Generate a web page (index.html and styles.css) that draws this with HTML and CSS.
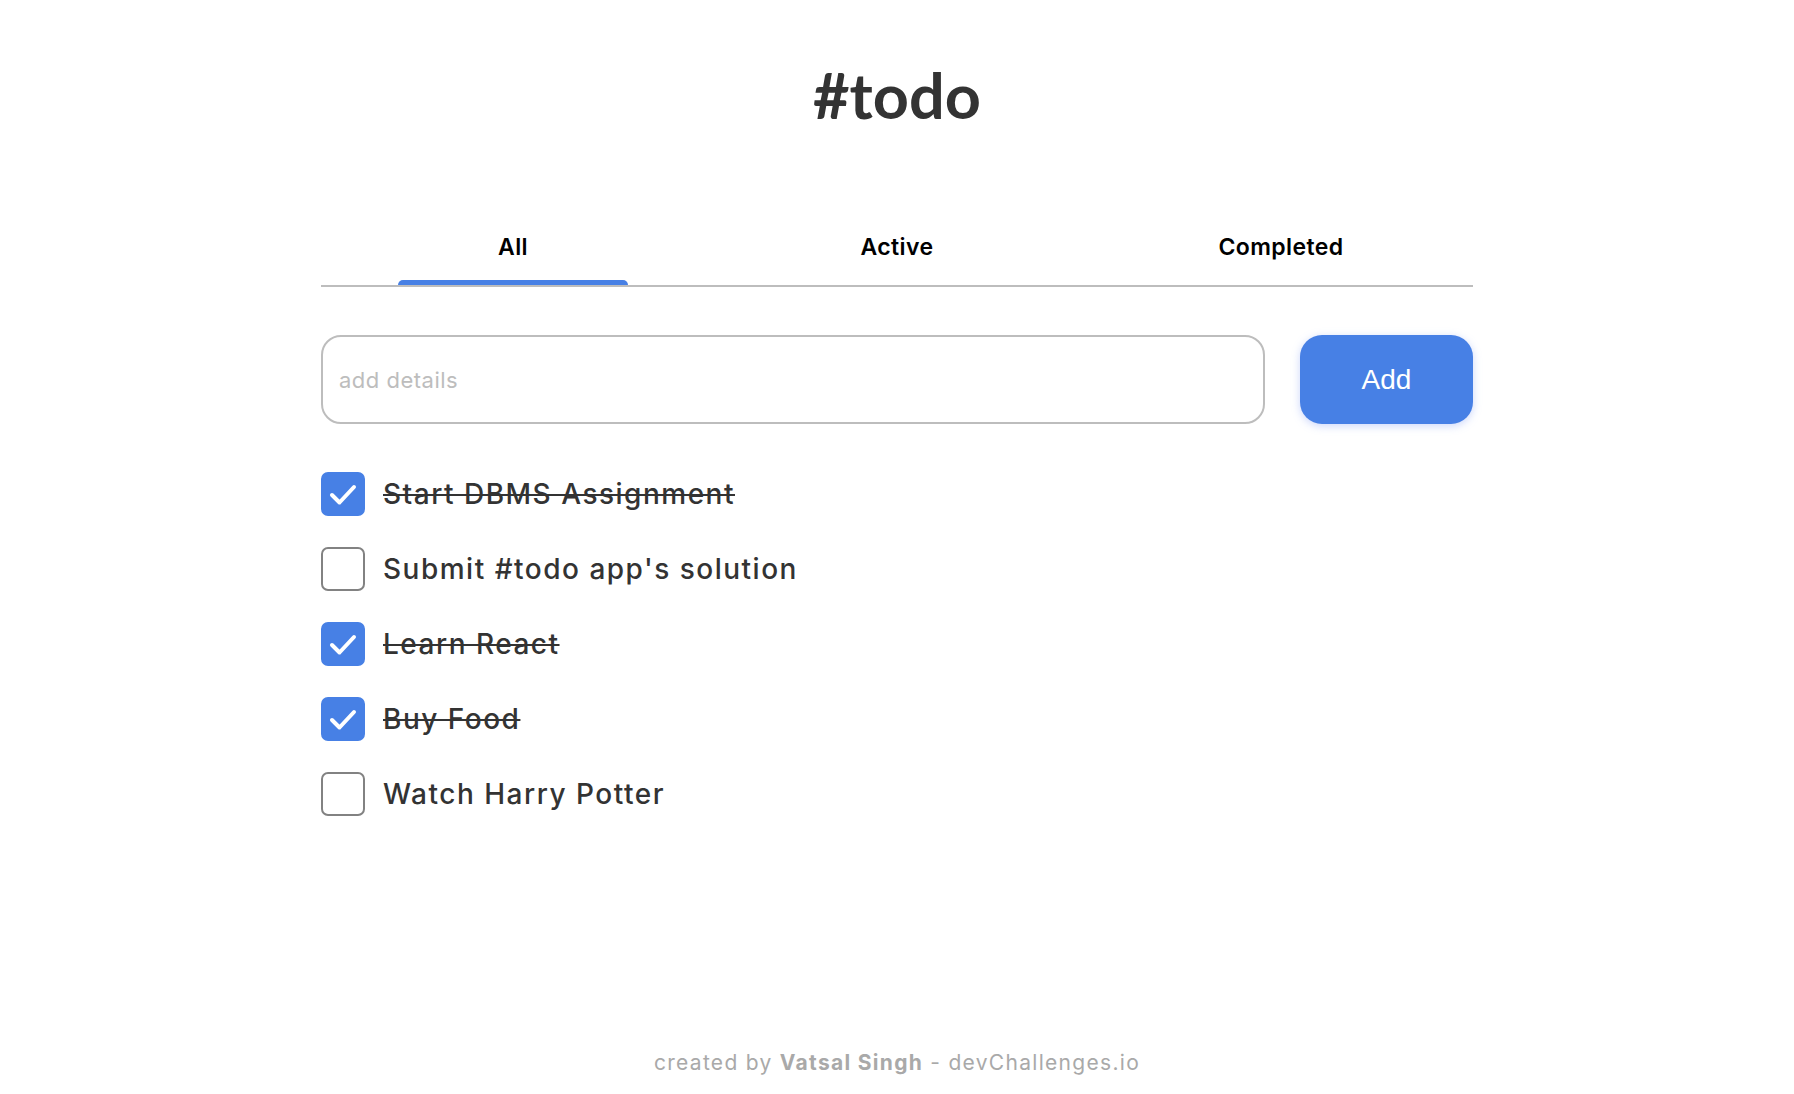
FILE: index.html
```html
<!DOCTYPE html>
<html lang="en">
<head>
<meta charset="utf-8">
<title>#todo</title>
<link rel="stylesheet" href="styles.css">
</head>
<body>
<main class="app">
  <h1 class="title">#todo</h1>
  <nav class="tabs">
    <div class="tab active"><span class="tab-label">All</span><span class="tab-bar"></span></div>
    <div class="tab"><span class="tab-label">Active</span><span class="tab-bar"></span></div>
    <div class="tab"><span class="tab-label">Completed</span><span class="tab-bar"></span></div>
  </nav>
  <form class="add-form">
    <input class="add-input" type="text" placeholder="add details">
    <button class="add-btn" type="button">Add</button>
  </form>
  <ul class="list">
    <li class="item done">
      <span class="box checked"><svg viewBox="0 0 44 44" width="44" height="44"><path d="M11 23 L18.5 30.5 L33 15" fill="none" stroke="#fff" stroke-width="4" stroke-linecap="round" stroke-linejoin="round"/></svg></span>
      <span class="label">Start DBMS Assignment</span>
    </li>
    <li class="item">
      <span class="box"></span>
      <span class="label">Submit #todo app's solution</span>
    </li>
    <li class="item done">
      <span class="box checked"><svg viewBox="0 0 44 44" width="44" height="44"><path d="M11 23 L18.5 30.5 L33 15" fill="none" stroke="#fff" stroke-width="4" stroke-linecap="round" stroke-linejoin="round"/></svg></span>
      <span class="label">Learn React</span>
    </li>
    <li class="item done">
      <span class="box checked"><svg viewBox="0 0 44 44" width="44" height="44"><path d="M11 23 L18.5 30.5 L33 15" fill="none" stroke="#fff" stroke-width="4" stroke-linecap="round" stroke-linejoin="round"/></svg></span>
      <span class="label">Buy Food</span>
    </li>
    <li class="item">
      <span class="box"></span>
      <span class="label">Watch Harry Potter</span>
    </li>
  </ul>
</main>
<footer class="footer">created by <b>Vatsal Singh</b> - devChallenges.io</footer>
</body>
</html>
```

FILE: styles.css
```css
html, body {
  margin: 0;
  padding: 0;
  background: #fff;
}
body {
  min-height: 100vh;
  display: flex;
  flex-direction: column;
  font-family: Inter, "Open Sans", sans-serif;
  color: #333333;
}
.app {
  width: 1152px;
  margin: 0 auto;
}
.title {
  margin: 0;
  padding-top: 64px;
  font-family: Lato, Inter, sans-serif;
  font-weight: 700;
  font-size: 63px;
  line-height: 62px;
  text-align: center;
  color: #333333;
}
.tabs {
  display: grid;
  grid-template-columns: repeat(3, 1fr);
  margin-top: 107px;
  border-bottom: 2px solid #BDBDBD;
}
.tab {
  display: flex;
  flex-direction: column;
  align-items: center;
}
.tab-label {
  font-size: 23px;
  font-weight: 600;
  letter-spacing: 0.4px;
  line-height: 28px;
  color: #000;
}
.tab-bar {
  width: 230px;
  height: 5px;
  margin-top: 19px;
  border-radius: 5px 5px 0 0;
  background: transparent;
}
.tab.active .tab-bar {
  background: #4780E5;
}
.add-form {
  display: flex;
  gap: 35px;
  margin-top: 48px;
}
.add-input {
  flex: 1;
  height: 89px;
  box-sizing: border-box;
  border: 2px solid #BDBDBD;
  border-radius: 20px;
  padding: 0 16px;
  font-family: Inter, sans-serif;
  font-size: 22px;
  letter-spacing: 0.5px;
  color: #333;
  outline: none;
}
.add-input::placeholder {
  color: #BDBDBD;
}
.add-btn {
  width: 173px;
  height: 89px;
  border: none;
  border-radius: 22px;
  background: #4780E5;
  color: #fff;
  font-family: "Liberation Sans", Arial, sans-serif;
  font-size: 28px;
  box-shadow: 0 2px 8px rgba(127, 156, 245, 0.4);
}
.list {
  list-style: none;
  margin: 48px 0 0;
  padding: 0;
  display: flex;
  flex-direction: column;
  gap: 31px;
}
.item {
  display: flex;
  align-items: center;
  gap: 18px;
}
.box {
  width: 44px;
  height: 44px;
  box-sizing: border-box;
  border: 2px solid #828282;
  border-radius: 7px;
  flex: none;
  display: flex;
}
.box.checked {
  background: #4780E5;
  border-color: #4780E5;
}
.box.checked svg {
  margin: -2px;
}
.label {
  font-size: 28px;
  font-weight: 500;
  letter-spacing: 1.5px;
  line-height: 34px;
  color: #333333;
}
.item.done .label {
  text-decoration: line-through;
  text-decoration-thickness: 2px;
}
.footer {
  margin-top: auto;
  padding-bottom: 19px;
  text-align: center;
  font-size: 21px;
  letter-spacing: 1.3px;
  line-height: 24px;
  color: #A9A9A9;
}
.footer b {
  font-weight: 700;
}
```
